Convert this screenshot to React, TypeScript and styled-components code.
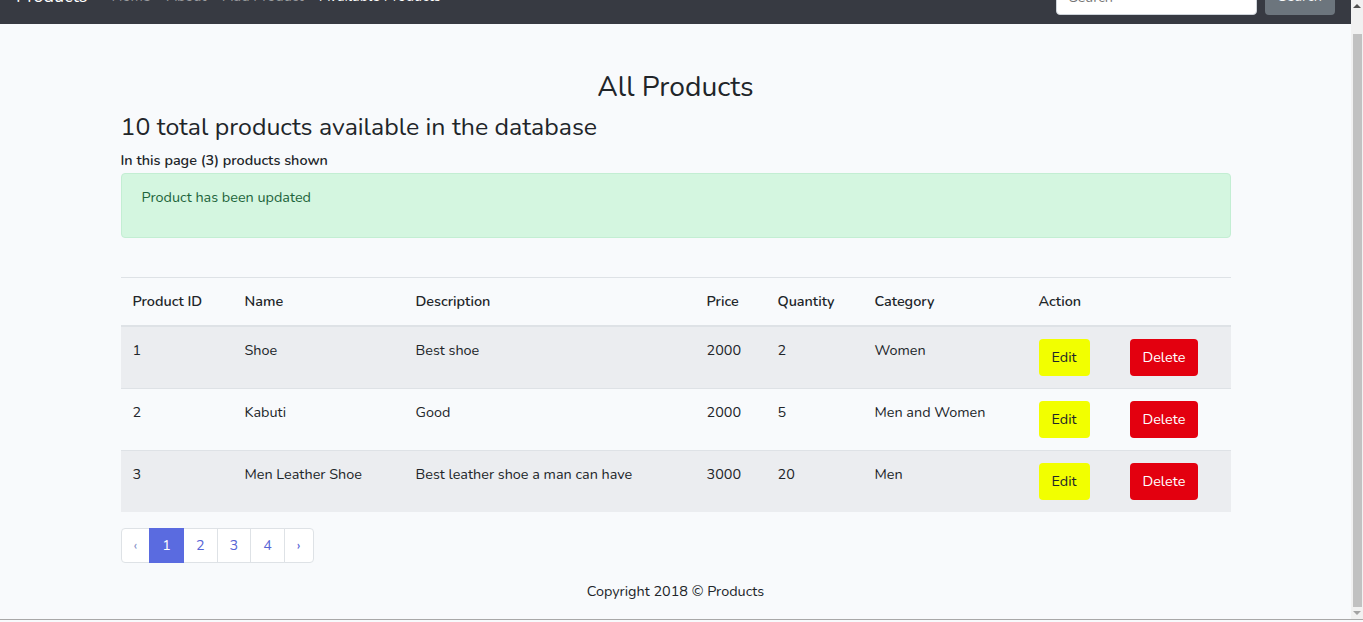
import React from "react";
import styled, { createGlobalStyle } from "styled-components";

const GlobalStyle = createGlobalStyle`
  html, body {
    margin: 0;
    padding: 0;
    height: 100%;
    overflow: hidden;
    background: #f8fafc;
  }
  body {
    font-family: "Nunito", Lato, "Liberation Sans", sans-serif;
    font-size: 14.4px;
    line-height: 1.6;
    color: #212529;
  }
  * { box-sizing: border-box; }
`;

const Frame = styled.div`
  display: flex;
  flex-direction: column;
  height: 622px;
  width: 1363px;
`;

const Screen = styled.div`
  display: flex;
  height: 619px;
  flex-shrink: 0;
`;

const BottomEdge = styled.div`
  height: 1px;
  background: #a8a8a8;
  flex-shrink: 0;
`;

const Page = styled.div`
  flex: 1;
  min-width: 0;
  overflow: hidden;
  display: flex;
  flex-direction: column;
`;

const NavClip = styled.div`
  height: 24px;
  overflow: hidden;
  display: flex;
  flex-direction: column;
  justify-content: flex-end;
  flex-shrink: 0;
`;

const Navbar = styled.nav`
  height: 55px;
  flex-shrink: 0;
  background: #373a42;
  display: flex;
  align-items: center;
  padding: 0 16px;
`;

const Brand = styled.span`
  font-size: 18px;
  color: #fff;
  margin-right: 16px;
`;

const NavLink = styled.span<{ $active?: boolean }>`
  padding: 0 8px;
  color: ${(p) => (p.$active ? "#fff" : "rgba(255,255,255,0.5)")};
`;

const NavSpacer = styled.div`
  flex: 1;
`;

const SearchInput = styled.input`
  width: 201px;
  height: 36px;
  border: 1px solid #ced4da;
  border-radius: 4px;
  padding: 6px 12px;
  font: inherit;
  margin-right: 8px;
  background: #fff;
`;

const SearchButton = styled.button`
  width: 70px;
  height: 36px;
  border: none;
  border-radius: 4px;
  background: #6c757d;
  color: #f8f9fa;
  font: inherit;
`;

const Main = styled.main`
  width: 1110px;
  margin: 0 auto;
  padding-top: 45px;
  display: flex;
  flex-direction: column;
`;

const Title = styled.h2`
  margin: 0;
  font-size: 28.2px;
  font-weight: 400;
  line-height: 35px;
  text-align: center;
`;

const Subtitle = styled.h3`
  margin: 8px 0 0;
  font-size: 24.9px;
  font-weight: 400;
  line-height: 30px;
`;

const Shown = styled.p`
  margin: 7px 0 1px;
  font-weight: 600;
  line-height: 23px;
`;

const Alert = styled.div`
  background: #d4f6e0;
  border: 1px solid #c3eed3;
  color: #1d643b;
  border-radius: 4px;
  padding: 12px 20px;
  height: 65px;
`;

const Table = styled.table`
  margin-top: 39px;
  width: 1110px;
  border-collapse: collapse;
  table-layout: fixed;
`;

const Th = styled.th`
  text-align: left;
  font-weight: 600;
  padding: 12px;
  line-height: 23px;
  border-top: 1px solid #dee2e6;
  border-bottom: 2px solid #dee2e6;
  vertical-align: bottom;
`;

const Tr = styled.tr<{ $striped?: boolean }>`
  background: ${(p) => (p.$striped ? "#ebedf0" : "transparent")};
`;

const Td = styled.td`
  padding: 12px;
  line-height: 23px;
  border-top: 1px solid #dee2e6;
  vertical-align: top;
`;

const ActionButton = styled.button<{ $kind: "edit" | "delete" }>`
  height: 37px;
  padding: 0 12px;
  border: 1px solid transparent;
  border-radius: 4px;
  font: inherit;
  line-height: 23px;
  background: ${(p) => (p.$kind === "edit" ? "#f2ff00" : "#e3000f")};
  color: ${(p) => (p.$kind === "edit" ? "#212529" : "#fff")};
`;

const Pager = styled.ul`
  display: flex;
  list-style: none;
  margin: 16px 0 0;
  padding: 0;
`;

const PageItem = styled.li<{ $active?: boolean; $muted?: boolean; $first?: boolean; $last?: boolean }>`
  height: 35px;
  padding: 0 12px;
  line-height: 33px;
  border: 1px solid ${(p) => (p.$active ? "#5a6be0" : "#dee2e6")};
  margin-left: ${(p) => (p.$first ? "0" : "-1px")};
  background: ${(p) => (p.$active ? "#5a6be0" : "#fff")};
  color: ${(p) => (p.$active ? "#fff" : p.$muted ? "#8a94c8" : "#5865d6")};
  border-radius: ${(p) => (p.$first ? "4px 0 0 4px" : p.$last ? "0 4px 4px 0" : "0")};
  position: relative;
  z-index: ${(p) => (p.$active ? 1 : 0)};
`;

const Footer = styled.footer`
  margin-top: 17px;
  text-align: center;
  line-height: 23px;
`;

const ScrollBar = styled.div`
  width: 12px;
  flex-shrink: 0;
  background: #f1f1f1;
  display: flex;
  flex-direction: column;
`;

const ArrowBox = styled.div<{ $down?: boolean }>`
  height: 12px;
  flex-shrink: 0;
  display: flex;
  align-items: center;
  justify-content: center;
  &::after {
    content: "";
    width: 0;
    height: 0;
    border-left: 4px solid transparent;
    border-right: 4px solid transparent;
    ${(p) =>
      p.$down
        ? "border-top: 4px solid #a3a3a3;"
        : "border-bottom: 4px solid #505050;"}
  }
`;

const Track = styled.div`
  flex: 1;
  padding: 22px 1px 0 2px;
  display: flex;
`;

const Thumb = styled.div`
  flex: 1;
  background: #c1c1c1;
`;

const products = [
  { id: 1, name: "Shoe", description: "Best shoe", price: 2000, qty: 2, category: "Women" },
  { id: 2, name: "Kabuti", description: "Good", price: 2000, qty: 5, category: "Men and Women" },
  { id: 3, name: "Men Leather Shoe", description: "Best leather shoe a man can have", price: 3000, qty: 20, category: "Men" },
];

const colWidths = [112, 171, 291, 71, 97, 164, 91, 113];

export default function App() {
  return (
    <>
      <GlobalStyle />
      <Frame>
        <Screen>
          <Page>
            <NavClip>
              <Navbar>
                <Brand>Products</Brand>
                <NavLink>Home</NavLink>
                <NavLink>About</NavLink>
                <NavLink>Add Product</NavLink>
                <NavLink $active>Available Products</NavLink>
                <NavSpacer />
                <SearchInput placeholder="Search" />
                <SearchButton>Search</SearchButton>
              </Navbar>
            </NavClip>
            <Main>
              <Title>All Products</Title>
              <Subtitle>10 total products available in the database</Subtitle>
              <Shown>In this page (3) products shown</Shown>
              <Alert>Product has been updated</Alert>
              <Table>
                <colgroup>
                  {colWidths.map((w, i) => (
                    <col key={i} style={{ width: w }} />
                  ))}
                </colgroup>
                <thead>
                  <tr>
                    <Th>Product ID</Th>
                    <Th>Name</Th>
                    <Th>Description</Th>
                    <Th>Price</Th>
                    <Th>Quantity</Th>
                    <Th>Category</Th>
                    <Th>Action</Th>
                    <Th></Th>
                  </tr>
                </thead>
                <tbody>
                  {products.map((p, i) => (
                    <Tr key={p.id} $striped={i % 2 === 0}>
                      <Td>{p.id}</Td>
                      <Td>{p.name}</Td>
                      <Td>{p.description}</Td>
                      <Td>{p.price}</Td>
                      <Td>{p.qty}</Td>
                      <Td>{p.category}</Td>
                      <Td>
                        <ActionButton $kind="edit">Edit</ActionButton>
                      </Td>
                      <Td>
                        <ActionButton $kind="delete">Delete</ActionButton>
                      </Td>
                    </Tr>
                  ))}
                </tbody>
              </Table>
              <Pager>
                <PageItem $first $muted>‹</PageItem>
                <PageItem $active>1</PageItem>
                <PageItem>2</PageItem>
                <PageItem>3</PageItem>
                <PageItem>4</PageItem>
                <PageItem $last>›</PageItem>
              </Pager>
              <Footer>Copyright 2018 © Products</Footer>
            </Main>
          </Page>
          <ScrollBar>
            <ArrowBox />
            <Track>
              <Thumb />
            </Track>
            <ArrowBox $down />
          </ScrollBar>
        </Screen>
        <BottomEdge />
      </Frame>
    </>
  );
}
